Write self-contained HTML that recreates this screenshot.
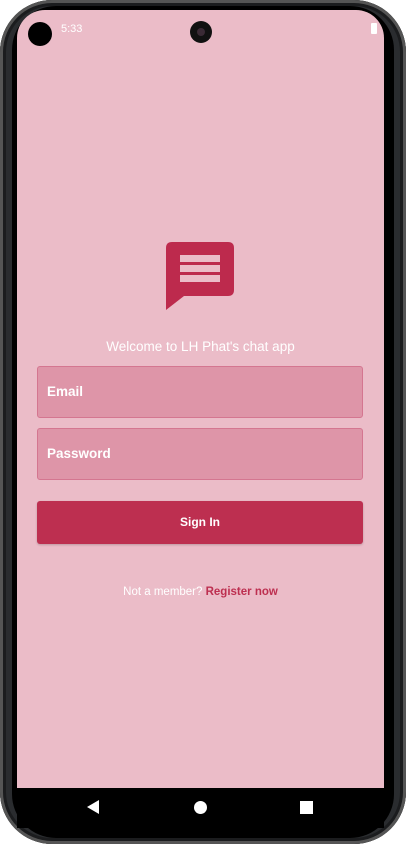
<!DOCTYPE html>
<html><head><meta charset="utf-8"><style>
*{margin:0;padding:0;box-sizing:border-box}
body{width:406px;height:844px;background:#fff;position:relative;overflow:hidden;font-family:"Liberation Sans",Roboto,sans-serif}
.phone{position:absolute;left:0;top:0;width:406px;height:844px;border-radius:52px;background:#2a2c2f;box-shadow:inset 0 0 0 3px #555,inset 0 0 0 6px #1b1c1e}
.inner{position:absolute;left:12px;top:6px;width:382px;height:832px;border-radius:44px;background:#000}
.screen{position:absolute;left:17px;top:10px;width:367px;height:778px;background:#ebbcc8;border-radius:28px 28px 0 0;overflow:hidden}
.nav{position:absolute;left:17px;top:788px;width:367px;height:40px;background:#000}
.abs{position:absolute}
.field{position:absolute;left:20px;width:326px;height:52px;background:#de95a8;border:1px solid #d47690;border-radius:3px;color:#fff;font-size:13.5px;font-weight:bold;padding-left:9px;line-height:50px}
</style></head><body>
<div class="phone"></div>
<div class="inner"></div>
<div class="screen">
  <div class="abs" style="left:11px;top:12px;width:24px;height:24px;border-radius:50%;background:#000"></div>
  <div class="abs" style="left:44px;top:13px;color:#fff;font-size:11px">5:33</div>
  <div class="abs" style="left:173px;top:11px;width:22px;height:22px;border-radius:50%;background:#111"><div style="margin:7px;width:8px;height:8px;border-radius:50%;background:#3a2a35"></div></div>
  <div class="abs" style="left:354px;top:13px;width:6px;height:11px;background:#fff;border-radius:1px"></div>
  <svg class="abs" style="left:149px;top:232px" width="70" height="70" viewBox="0 0 70 70">
    <path d="M6 0H62Q68 0 68 6V48Q68 54 62 54H18L0 68V6Q0 0 6 0Z" fill="#bd2a4d"/>
    <rect x="14" y="13" width="40" height="7" fill="#ebbcc8"/>
    <rect x="14" y="23" width="40" height="7" fill="#ebbcc8"/>
    <rect x="14" y="33" width="40" height="7" fill="#ebbcc8"/>
  </svg>
  <div class="abs" style="left:0;width:367px;top:329px;text-align:center;color:#fff;font-size:13.5px">Welcome to LH Phat's chat app</div>
  <div class="field" style="top:356px">Email</div>
  <div class="field" style="top:418px">Password</div>
  <div class="abs" style="left:20px;top:491px;width:326px;height:43px;background:#bd2f50;border-radius:3px;color:#fff;font-size:12px;font-weight:bold;text-align:center;line-height:43px;box-shadow:0 1px 2px rgba(0,0,0,.2)">Sign In</div>
  <div class="abs" style="left:0;width:367px;top:576px;text-align:center;color:#fff;font-size:11.5px">Not a member? <b style="color:#bd2f50">Register now</b></div>
</div>
<div class="nav">
  <svg class="abs" style="left:70px;top:12px" width="12" height="14"><path d="M0 7L12 0V14Z" fill="#fff"/></svg>
  <div class="abs" style="left:177px;top:13px;width:13px;height:13px;border-radius:50%;background:#fff"></div>
  <div class="abs" style="left:283px;top:13px;width:13px;height:13px;background:#fff"></div>
</div>
</body></html>
